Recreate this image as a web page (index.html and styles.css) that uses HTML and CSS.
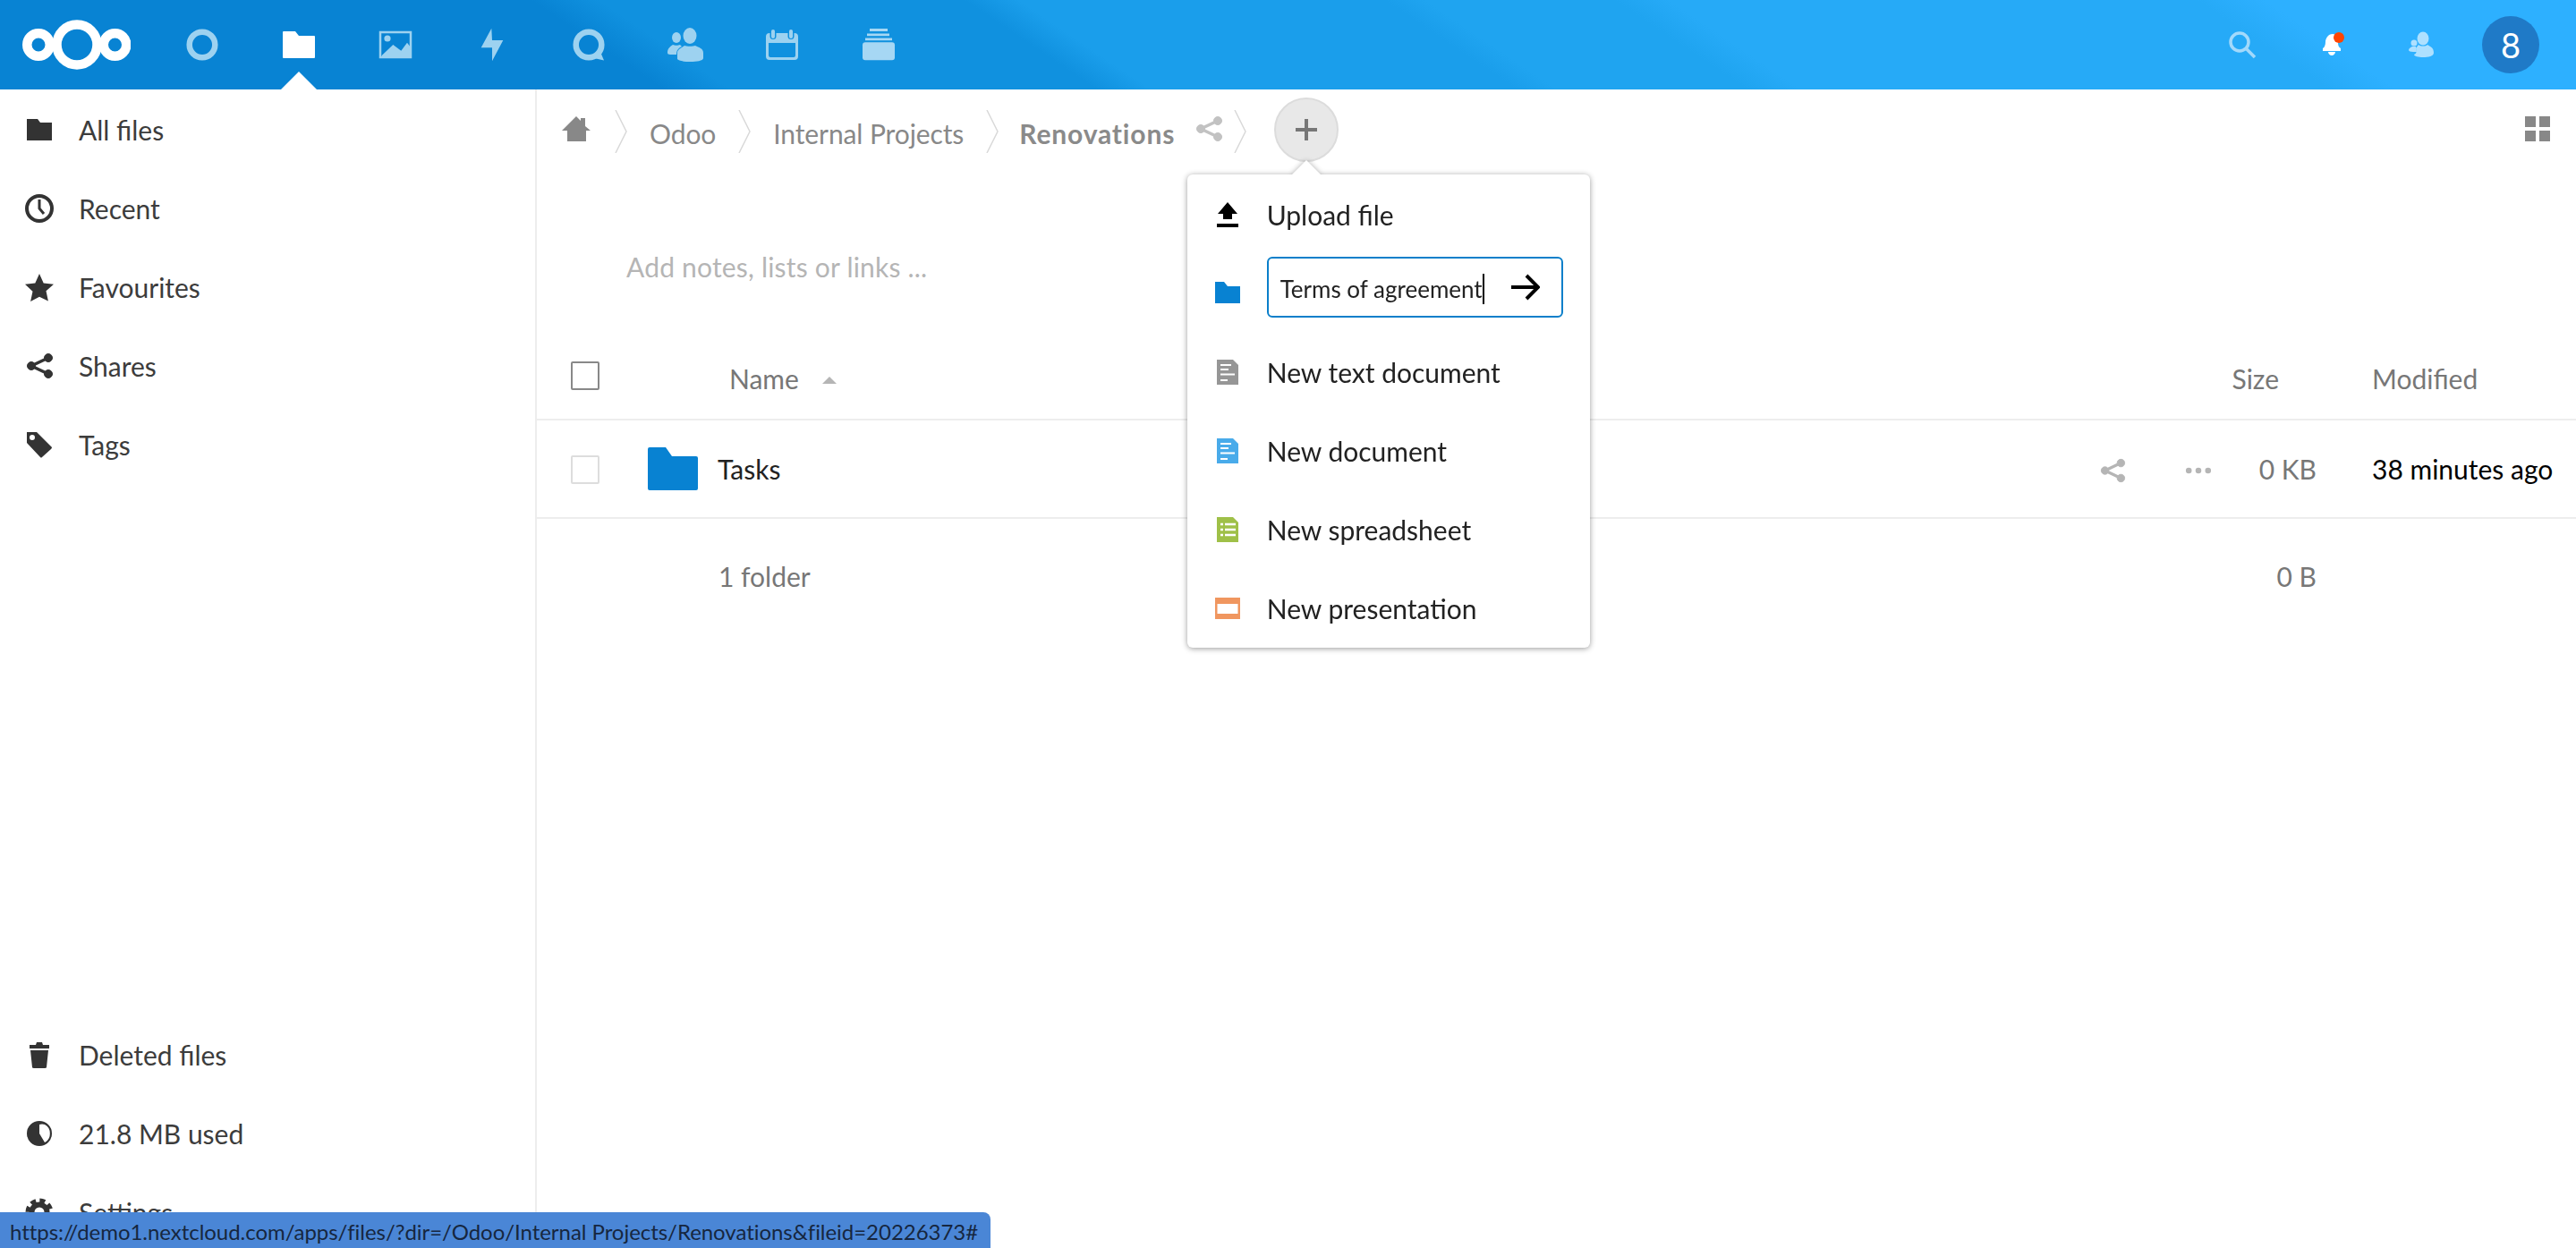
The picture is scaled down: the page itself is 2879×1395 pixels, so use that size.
FILE: index.html
```html
<!DOCTYPE html>
<html lang="en">
<head>
    <meta charset="UTF-8">
    <meta name="viewport" content="width=device-width, initial-scale=1.0">
    <title>Files - Nextcloud</title>
    <link rel="stylesheet" href="styles.css">
</head>
<body>
    <div class="header">
        <a class="logo" href="#">
            <svg width="121" height="56" viewBox="0 0 121 56" fill="none" stroke="#fff" stroke-width="10.5">
                <circle cx="18" cy="28" r="12.75"/>
                <circle cx="61" cy="28" r="22.5"/>
                <circle cx="103.5" cy="28" r="12.75"/>
            </svg>
        </a>
        <div class="apps">
            <a class="app" href="#">
                <svg viewBox="0 0 40 40"><circle cx="20" cy="20" r="14.3" fill="none" stroke="#9dd2f0" stroke-width="6.5"/></svg>
            </a>
            <a class="app active" href="#">
                <svg viewBox="0 0 40 40"><path fill="#fff" d="M2 6q0-1 1-1h13l4 5h17q1 0 1 1v23q0 1-1 1H3q-1 0-1-1z"/></svg>
            </a>
            <a class="app" href="#">
                <svg viewBox="0 0 40 40"><rect x="3" y="6" width="34" height="28" fill="none" stroke="#9dd2f0" stroke-width="2.5"/><circle cx="11" cy="13" r="3.6" fill="#9dd2f0"/><path fill="#9dd2f0" d="M4.7 32 17.3 20l9 6.7 6.7-9 4.3 5.6V35H4.700z"/></svg>
            </a>
            <a class="app" href="#">
                <svg viewBox="0 0 40 40"><path fill="#9dd2f0" d="M19.300 1.700 7.700 23.300H20v15l12.300-23.300H20z"/></svg>
            </a>
            <a class="app" href="#">
                <svg viewBox="0 0 40 40"><circle cx="20" cy="20" r="14.300" fill="none" stroke="#9dd2f0" stroke-width="6.500"/><path fill="#9dd2f0" d="m26 35 7-7 4 9.500z"/></svg>
            </a>
            <a class="app" href="#">
                <svg viewBox="0 0 40 40" fill="#9dd2f0"><ellipse cx="10" cy="12" rx="5" ry="6"/><ellipse cx="25" cy="10" rx="7.500" ry="9"/><path d="M6 20c2 1 6 1 8 0l2 2c-4 2-6 4-6 9H3c-2 0-3-1-3-2 0-5 3-7 6-9z"/><path d="M19 21c2 1 10 1 12 0 4 2 9 3 9 8v6c0 3-8 4-14 4s-14-1-15-3v-7c0-4 5-6 8-8z"/></svg>
            </a>
            <a class="app" href="#">
                <svg viewBox="0 0 40 40"><path fill="#9dd2f0" fill-rule="evenodd" d="M6 7h28a4 4 0 0 1 4 4v22a4 4 0 0 1-4 4H6a4 4 0 0 1-4-4V11a4 4 0 0 1 4-4zm-1 11v14q0 2 2 2h26q2 0 2-2V18z"/><rect x="6.500" y="2" width="7" height="12" rx="3.500" fill="#1091df"/><rect x="8" y="3" width="4" height="10" rx="2" fill="#9dd2f0"/><rect x="26.500" y="2" width="7" height="12" rx="3.500" fill="#1091df"/><rect x="28" y="3" width="4" height="10" rx="2" fill="#9dd2f0"/></svg>
            </a>
            <a class="app" href="#">
                <svg viewBox="0 0 40 40" fill="#a6d7f4"><rect x="10" y="2" width="20" height="3"/><rect x="7" y="7.500" width="25" height="2.700"/><rect x="5" y="12.500" width="30" height="2.700"/><rect x="2" y="17.300" width="36" height="20" rx="3"/></svg>
            </a>
        </div>
        <div class="header-right">
            <a class="tool" href="#">
                <svg viewBox="0 0 40 40" fill="none" stroke="#a2d9fb" stroke-width="3.500"><circle cx="17" cy="17" r="10"/><path d="m24 24 10 10"/></svg>
            </a>
            <a class="tool" href="#">
                <svg viewBox="0 0 40 40"><path fill="#fff" d="M21 8c-5 0-8 5-8 9 0 3-1 6-3 7v3h20v-3c-2-1-3-3-3-6 0-5-2-10-6-10z"/><path fill="#fff" d="M16 28h8c0 2-2 4-4 4s-4-2-4-4z"/><circle cx="28" cy="12" r="6" fill="#ff4400"/></svg>
            </a>
            <a class="tool" href="#">
                <svg viewBox="0 0 40 40" fill="#aee0ff"><ellipse cx="22" cy="13" rx="6.500" ry="7.500"/><circle cx="12" cy="18" r="3.500"/><path d="M17 20c2 2 8 2 10 0 3 2 7 3 7 9 0 4-6 5-12 5-5 0-10-1-10-3 3-1 3-4 2-7z"/><path d="M10 22h4l1 6h-4c-3 0-5-1-5-2 0-2 2-3 4-4z"/></svg>
            </a>
            <a class="tool" href="#"><span class="avatar">8</span></a>
        </div>
    </div>

    <div class="content">
        <div class="sidebar">
            <div class="nav">
                <a href="#">
                    <svg viewBox="0 0 32 32"><path fill="#333" d="M2 4h12l3 4h13v20H2z"/></svg>
                    All files
                </a>
                <a href="#">
                    <svg viewBox="0 0 32 32" fill="none" stroke="#333"><circle cx="16" cy="16" r="14" stroke-width="4"/><path stroke-width="3" d="M16 6v10l5 6"/></svg>
                    Recent
                </a>
                <a href="#">
                    <svg viewBox="0 0 32 32"><path fill="#333" d="m16 1 4.700 10.500 11.300 1.200-8.500 7.600 2.400 11.200L16 26.700 6.100 32l2.400-11.200L0 12.700l11.300-1.200z"/></svg>
                    Favourites
                </a>
                <a href="#">
                    <svg viewBox="0 0 32 32" fill="#333" stroke="#333"><circle cx="26" cy="7" r="4.500"/><circle cx="26" cy="25" r="4.500"/><circle cx="7" cy="16" r="4.500"/><path fill="none" stroke-width="3.500" d="M26 7 7 16l19 9"/></svg>
                    Shares
                </a>
                <a href="#">
                    <svg viewBox="0 0 32 32"><path fill="#333" fill-rule="evenodd" d="M2 2h11l17 17q0 1-1 2L19 30q-1 1-2 0L2 14zm6 3a3 3 0 1 0 0 6 3 3 0 0 0 0-6z"/></svg>
                    Tags
                </a>
            </div>
            <div class="nav nav-bottom">
                <a href="#">
                    <svg viewBox="0 0 32 32"><path fill="#333" d="M13 2h6l1 3h7v4H5V5h7zM6 11h20l-2 19q0 1-2 1H10q-2 0-2-1z"/></svg>
                    Deleted files
                </a>
                <a href="#">
                    <svg viewBox="0 0 32 32"><path fill="#333" fill-rule="evenodd" d="M16 2a14 14 0 1 1 0 28 14 14 0 0 1 0-28zm0 4v10l6 10a10 11 0 0 0 0-20 10 10 0 0 0-6 0z"/></svg>
                    21.8 MB used
                </a>
                <a href="#">
                    <svg viewBox="0 0 32 32" fill="none" stroke="#333"><circle cx="16" cy="16" r="8.500" stroke-width="6"/><circle cx="16" cy="16" r="13" stroke-width="5" stroke-dasharray="6 4.200"/></svg>
                    Settings
                </a>
            </div>
        </div>

        <div class="main">
            <div class="crumbs">
                <svg class="home" viewBox="0 0 32 28"><path fill="#888" d="M16 0l5 5V2h5v9l6 5h-5v12H6V16H0z"/></svg>
                <svg class="chevron" viewBox="0 0 14 48"><path fill="none" stroke="#d9d9d9" stroke-width="1.500" d="M1 0l12 24L1 48"/></svg>
                <a class="crumb" href="#">Odoo</a>
                <svg class="chevron" viewBox="0 0 14 48"><path fill="none" stroke="#d9d9d9" stroke-width="1.500" d="M1 0l12 24L1 48"/></svg>
                <a class="crumb" href="#">Internal Projects</a>
                <svg class="chevron" viewBox="0 0 14 48"><path fill="none" stroke="#d9d9d9" stroke-width="1.500" d="M1 0l12 24L1 48"/></svg>
                <a class="crumb current" href="#">Renovations</a>
                <svg class="crumb-share" viewBox="0 0 32 32" fill="#c2c2c2" stroke="#c2c2c2"><circle cx="26" cy="7" r="4.500"/><circle cx="26" cy="25" r="4.500"/><circle cx="7" cy="16" r="4.500"/><path fill="none" stroke-width="3.500" d="M26 7 7 16l19 9"/></svg>
                <svg class="chevron last" viewBox="0 0 14 48"><path fill="none" stroke="#d9d9d9" stroke-width="1.500" d="M1 0l12 24L1 48"/></svg>

                <div class="new-wrap">
                    <button class="new-btn"><span class="plus"></span></button>
                    <div class="new-menu">
                        <div class="new-item">
                            <svg viewBox="0 0 28 28"><path fill="#000" d="m14 0 11 13h-6v6H9v-6H3zM2 24h24v4H2z"/></svg>
                            Upload file
                        </div>
                        <div class="new-item new-folder">
                            <svg viewBox="0 0 28 24"><path fill="#0882d2" d="M0 0h10l4 5h14v19H0z"/></svg>
                            <div class="new-input">
                                <span class="typed">Terms of agreement</span>
                                <svg viewBox="0 0 32 30" fill="none" stroke="#000" stroke-width="4"><path d="M0 15h29M17 2l13 13-13 13"/></svg>
                            </div>
                        </div>
                        <div class="new-item">
                            <svg viewBox="0 0 28 28"><path fill="#969696" d="M2 0h18l6 6v22H2z"/><path stroke="#fff" stroke-width="1.800" d="M6 6h12M6 11h9M6 16.500h16M6 23h8"/></svg>
                            New text document
                        </div>
                        <div class="new-item">
                            <svg viewBox="0 0 28 28"><path fill="#49abea" d="M2 0h18l6 6v22H2z"/><path stroke="#fff" stroke-width="1.800" d="M6 6h12M6 11h9M6 16.500h16M6 23h8"/></svg>
                            New document
                        </div>
                        <div class="new-item">
                            <svg viewBox="0 0 28 28"><path fill="#9fc048" d="M2 0h18l6 6v22H2z"/><path stroke="#fff" stroke-width="2.500" d="M6 8h3M11 8h12M6 14h3M11 14h12M6 20h3M11 20h12"/></svg>
                            New spreadsheet
                        </div>
                        <div class="new-item">
                            <svg viewBox="0 0 28 24"><path fill="#f0965f" d="M0 0h28v24H0z"/><path fill="#fff" d="M2.500 7h23v11h-23z"/></svg>
                            New presentation
                        </div>
                    </div>
                </div>

                <div class="view-toggle"><i></i><i></i><i></i><i></i></div>
            </div>

            <div class="notes">Add notes, lists or links ...</div>

            <div class="file-row file-head">
                <div class="cell-check"><span class="check dark"></span></div>
                <div class="cell-name name-head">Name <span class="sort"></span></div>
                <div></div>
                <div class="cell-size size-head">Size</div>
                <div class="cell-date date-head">Modified</div>
            </div>
            <div class="file-row file-item">
                <div class="cell-check"><span class="check"></span></div>
                <div class="cell-name">
                    <svg class="big-folder" viewBox="0 0 56 48"><path fill="#0882d2" d="M0 2q0-2 2-2h18l7 10h27q2 0 2 2v34q0 2-2 2H2q-2 0-2-2z"/></svg>
                    <span class="file-name">Tasks</span>
                </div>
                <div class="cell-actions">
                    <svg viewBox="0 0 32 32" fill="#b5b5b5" stroke="#b5b5b5"><circle cx="26" cy="7" r="4.500"/><circle cx="26" cy="25" r="4.500"/><circle cx="7" cy="16" r="4.500"/><path fill="none" stroke-width="3.500" d="M26 7 7 16l19 9"/></svg>
                    <svg viewBox="0 0 32 32" fill="#b5b5b5"><circle cx="4.500" cy="16" r="3.500"/><circle cx="16" cy="16" r="3.500"/><circle cx="27.500" cy="16" r="3.500"/></svg>
                </div>
                <div class="cell-size">0 KB</div>
                <div class="cell-date date-value">38 minutes ago</div>
            </div>
            <div class="file-row file-sum">
                <div></div>
                <div class="cell-name sum-name">1 folder</div>
                <div></div>
                <div class="cell-size">0 B</div>
                <div></div>
            </div>
        </div>
    </div>

    <div class="status-bubble">https://demo1.nextcloud.com/apps/files/?dir=/Odoo/Internal Projects/Renovations&amp;fileid=20226373#</div>
</body>
</html>
```

FILE: styles.css
```css
* {
    margin: 0;
    padding: 0;
    box-sizing: border-box;
    font-family: Lato, "Open Sans", sans-serif;
}

html, body {
    height: 100%;
    overflow: hidden;
}

body {
    display: flex;
    flex-direction: column;
    background-color: #fff;
    color: #222;
    font-size: 30px;
}

a {
    text-decoration: none;
    color: inherit;
}

/* Header */
.header {
    height: 100px;
    flex-shrink: 0;
    display: flex;
    align-items: stretch;
    background-image: linear-gradient(34deg,
        #0883d3 24.5%, #1091df 27%, #1091df 40.5%, #1a9eeb 42.5%,
        #1a9eeb 56%, #1fa4f0 57.5%, #1fa4f0 64.5%, #26aaf7 66.5%,
        #26aaf7 86%, #2db0ff 88.5%);
}

.logo {
    width: 172px;
    padding-left: 25px;
    display: flex;
    align-items: center;
}

.apps {
    display: flex;
}

.app {
    position: relative;
    width: 108px;
    display: flex;
    align-items: center;
    justify-content: center;
}

.app svg, .tool svg {
    width: 40px;
    height: 40px;
}

.app.active::after {
    content: "";
    position: absolute;
    left: 34px;
    bottom: 0;
    border-left: 20px solid transparent;
    border-right: 20px solid transparent;
    border-bottom: 20px solid #fff;
}

.header-right {
    margin-left: auto;
    padding-right: 23px;
    display: flex;
}

.tool {
    width: 100px;
    display: flex;
    align-items: center;
    justify-content: center;
}

.avatar {
    width: 64px;
    height: 64px;
    border-radius: 50%;
    background-color: #1f7ac7;
    color: #fff;
    font-size: 38px;
    display: flex;
    align-items: center;
    justify-content: center;
}

.content {
    flex: 1;
    display: flex;
    min-height: 0;
}

/* Sidebar */
.sidebar {
    width: 600px;
    flex-shrink: 0;
    border-right: 2px solid #ededed;
    display: flex;
    flex-direction: column;
    justify-content: space-between;
    padding-top: 1px;
}

.nav-bottom {
    margin-bottom: -4px;
}

.nav a {
    height: 88px;
    padding-left: 28px;
    display: flex;
    align-items: center;
    gap: 28px;
    color: #3c3c3c;
}

.nav svg {
    width: 32px;
    height: 32px;
}

/* Breadcrumb */
.main {
    flex: 1;
    min-width: 0;
    display: flex;
    flex-direction: column;
}

.crumbs {
    height: 94px;
    flex-shrink: 0;
    padding-left: 28px;
    padding-right: 29px;
    display: flex;
    align-items: center;
    gap: 25px;
}

.home {
    width: 32px;
    height: 28px;
    margin-top: -6px;
    margin-right: 2px;
}

.chevron {
    width: 14px;
    height: 48px;
}

.chevron.last {
    margin-left: -13px;
    margin-right: 6px;
}

.crumb {
    color: #888;
    letter-spacing: -.1px;
    margin-top: 3px;
}

.crumb.current {
    color: #8a8a8a;
    font-weight: 700;
    letter-spacing: .85px;
    margin-left: -2px;
}

.crumb-share {
    width: 32px;
    height: 32px;
    margin-top: -6px;
    margin-left: -3px;
}

.view-toggle {
    margin-left: auto;
    width: 28px;
    display: grid;
    grid-template-columns: 12px 12px;
    gap: 4px;
    margin-top: -6px;
}

.view-toggle i {
    height: 12px;
    background-color: #888;
}

/* New menu */
.new-wrap {
    position: relative;
    height: 72px;
    margin-top: -4px;
}

.new-btn {
    width: 72px;
    height: 72px;
    border-radius: 50%;
    border: 2px solid #dcdcdc;
    background-color: #e8e8e8;
    display: flex;
    align-items: center;
    justify-content: center;
}

.plus {
    position: relative;
    width: 24px;
    height: 4px;
    background-color: #777;
}

.plus::after {
    content: "";
    position: absolute;
    left: 10px;
    top: -10px;
    width: 4px;
    height: 24px;
    background-color: #777;
}

.new-menu {
    position: absolute;
    z-index: 5;
    top: 86px;
    left: -97px;
    width: 450px;
    padding-top: 1px;
    background-color: #fff;
    border-radius: 6px;
    filter: drop-shadow(0 1px 3px rgba(0, 0, 0, .4));
}

.new-menu::before {
    content: "";
    position: absolute;
    top: -16px;
    left: 117px;
    border-left: 16px solid transparent;
    border-right: 16px solid transparent;
    border-bottom: 16px solid #fff;
}

.new-item {
    height: 88px;
    padding-left: 31px;
    display: flex;
    align-items: center;
    gap: 29.5px;
    color: #222;
}

.new-item > svg {
    width: 28px;
    height: 28px;
}

.new-folder {
    align-items: flex-start;
}

.new-folder > svg {
    margin-top: 29px;
}

.new-input {
    width: 331px;
    height: 68px;
    margin-top: 3px;
    padding: 3px 24px 0 13px;
    border: 2px solid #0a7fca;
    border-radius: 6px;
    display: flex;
    align-items: center;
    justify-content: space-between;
    font-size: 26px;
}

.new-input svg {
    width: 32px;
    height: 30px;
    margin-top: -3px;
}

.typed {
    border-right: 2px solid #000;
    line-height: 34px;
}

/* Notes */
.notes {
    height: 184px;
    flex-shrink: 0;
    padding-top: 82px;
    padding-left: 100px;
    line-height: 44px;
    letter-spacing: .2px;
    color: #b5b5b5;
}

/* File list */
.file-row {
    flex-shrink: 0;
    display: grid;
    grid-template-columns: 124px 1fr 150px 109px 290px;
    align-items: center;
}

.file-head {
    height: 92px;
    border-bottom: 2px solid #ededed;
    color: #777;
}

.file-item {
    height: 110px;
    border-bottom: 2px solid #ededed;
}

.file-sum {
    height: 128px;
}

.cell-check {
    padding-left: 38px;
    display: flex;
}

.check {
    width: 32px;
    height: 32px;
    border: 2px solid #ddd;
    border-radius: 2px;
    margin-top: 2px;
}

.check.dark {
    border-color: #888;
    margin-top: -7px;
}

.cell-name {
    display: flex;
    align-items: center;
}

.name-head {
    padding-left: 91px;
}

.sort {
    margin-left: 26px;
    margin-top: 4px;
    border-left: 8px solid transparent;
    border-right: 8px solid transparent;
    border-bottom: 8px solid #b5b5b5;
}

.big-folder {
    width: 56px;
    height: 48px;
    margin-right: 22px;
}

.file-name {
    color: #222;
}

.sum-name {
    padding-left: 79px;
    color: #777;
}

.cell-actions {
    display: flex;
    justify-content: space-between;
    padding-left: 16px;
    padding-right: 8px;
    margin-top: 4px;
}

.cell-actions svg {
    width: 30px;
    height: 30px;
}

.cell-size {
    text-align: right;
    color: #777;
}

.size-head {
    padding-right: 42px;
}

.cell-date {
    padding-left: 62px;
}

.date-value {
    color: #000;
}

/* Browser status bubble */
.status-bubble {
    position: fixed;
    left: 0;
    bottom: 0;
    z-index: 10;
    width: 1107px;
    height: 40px;
    padding-left: 11px;
    line-height: 43px;
    font-size: 24px;
    letter-spacing: -.04px;
    white-space: nowrap;
    color: #16263f;
    background-color: #4a86d6;
    border-top-right-radius: 8px;
}
```
